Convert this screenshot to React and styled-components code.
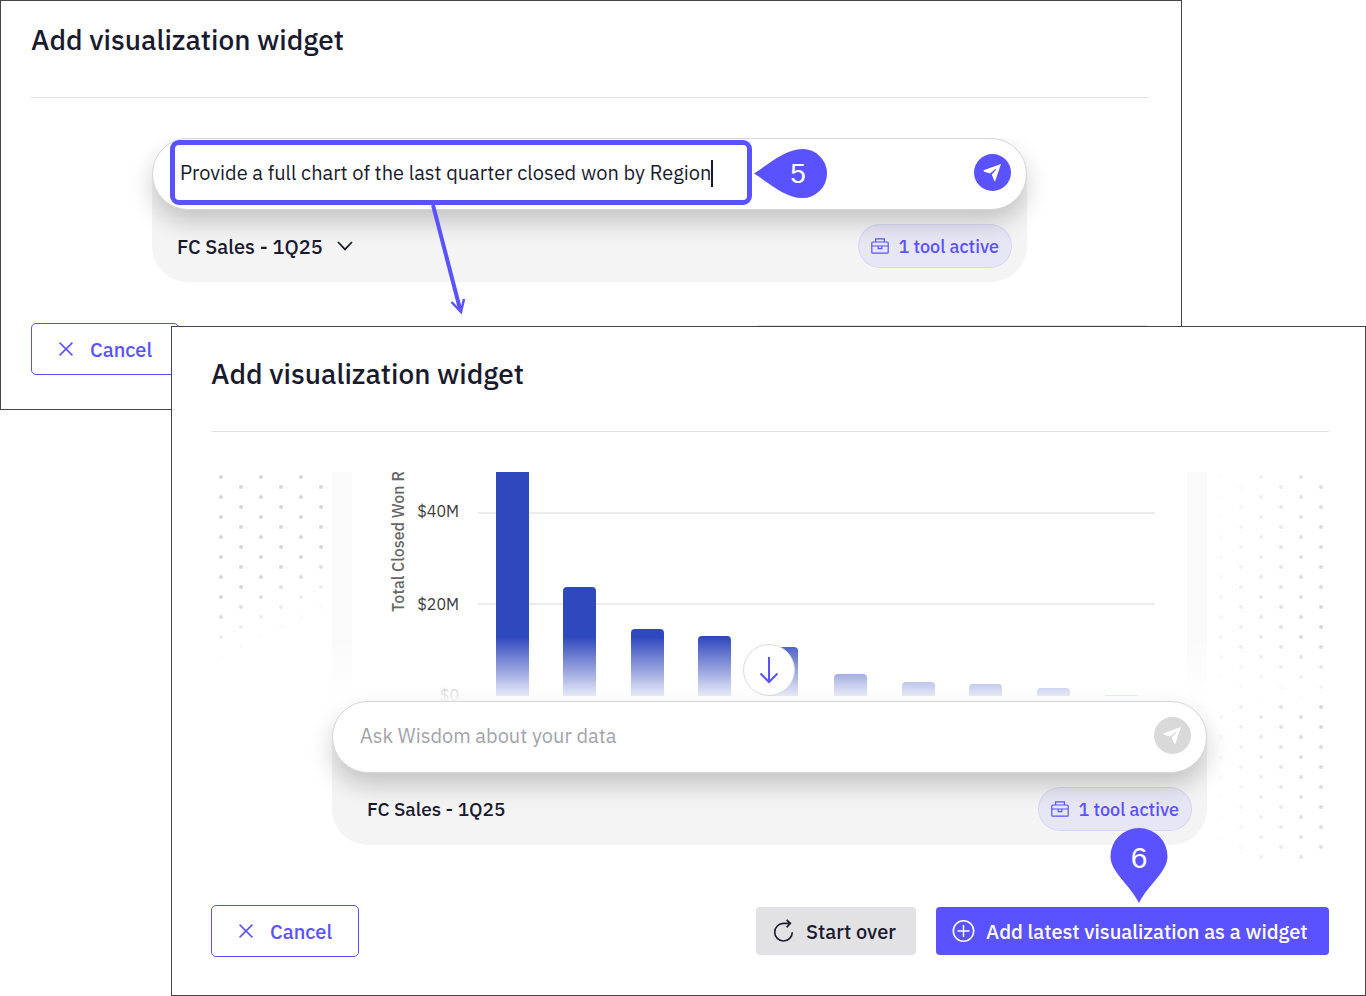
import { useState } from "react";
import styled, { createGlobalStyle, css } from "styled-components";

const bars = [
  { x: 164, top: -20 },
  { x: 231, top: 115 },
  { x: 299, top: 157 },
  { x: 366, top: 164 },
  { x: 433, top: 175 },
  { x: 502, top: 202 },
  { x: 570, top: 210 },
  { x: 637, top: 212 },
  { x: 705, top: 216 },
  { x: 773, top: 223 },
];

const BAR_WIDTH = 33;
const BASELINE = 224;

// rounded top corners only
function barPath({ x, top }) {
  const r = Math.min(4, BASELINE - top);
  return `M${x} ${BASELINE} V${top + r} Q${x} ${top} ${x + r} ${top} H${
    x + BAR_WIDTH - r
  } Q${x + BAR_WIDTH} ${top} ${x + BAR_WIDTH} ${top + r} V${BASELINE} Z`;
}

function makeDots(startX, columns, firstRowOffset, opacityAt) {
  const dots = [];
  for (let c = 0; c < columns; c++) {
    const x = startX + c * 20;
    const offset = (c + firstRowOffset) % 2 === 0 ? 5 : 15;
    for (let y = offset; y < 393; y += 20) {
      const opacity = Math.max(0, Math.min(1, opacityAt(x, y)));
      if (opacity > 0.02) {
        dots.push({ x, y, opacity });
      }
    }
  }
  return dots;
}

const leftDots = makeDots(10, 6, 0, (x, y) => (192 - y - (x - 10) / 2) / 60);
const rightDots = makeDots(
  -6,
  7,
  1,
  (x, y) => (x + 27) / 135 - Math.abs(y - 193) * 0.0014
);

function CloseIcon() {
  return (
    <svg width="14" height="14" viewBox="0 0 14 14" aria-hidden="true">
      <path d="M0.6 0.6 L13.4 13.4 M13.4 0.6 L0.6 13.4" stroke="currentColor" strokeWidth="1.5" />
    </svg>
  );
}

function RestartIcon() {
  return (
    <svg width="22" height="24" viewBox="0 0 22 24" fill="none" aria-hidden="true">
      <path
        d="M20.3 13.2 A8.8 8.8 0 1 1 11.5 4.4 H18.5 M14.6 0.8 L18.4 4.4 L14.6 8.4"
        stroke="currentColor"
        strokeWidth="1.6"
      />
    </svg>
  );
}

function PlusCircleIcon() {
  return (
    <svg width="24" height="24" viewBox="0 0 24 24" fill="none" aria-hidden="true">
      <circle cx="11.5" cy="12" r="10.2" stroke="currentColor" strokeWidth="1.6" />
      <path d="M11.5 6 V18 M5.5 12 H17.5" stroke="currentColor" strokeWidth="1.5" />
    </svg>
  );
}

function SendIcon() {
  return (
    <svg width="37" height="37" viewBox="0 0 37 37" aria-hidden="true">
      <path
        d="M27 10 L9.6 16.2 Q9.6 17.4 10.4 17.7 L16 19.4 L21.8 14.8 Q22.4 15 22 15.8 L17.7 20.6 L20.4 27 Q20.8 27.4 21.2 27 Z"
        fill="#fff"
      />
    </svg>
  );
}

function ToolboxIcon() {
  return (
    <svg width="18" height="18" viewBox="0 0 18 18" fill="none" aria-hidden="true">
      <g stroke="currentColor" strokeWidth="1.2">
        <rect x="0.8" y="5" width="16.4" height="11.2" rx="1" />
        <path d="M4.6 5 V1.8 H13.4 V5 M0.8 9 H17.2 M7.2 9 V11.6 H10.8 V9" />
      </g>
    </svg>
  );
}

function ChevronIcon() {
  return (
    <svg width="16" height="10" viewBox="0 0 16 10" fill="none" aria-hidden="true">
      <path d="M1 1 L8 8.4 L15 1" stroke="currentColor" strokeWidth="1.7" />
    </svg>
  );
}

function DotPattern({ dots }) {
  return (
    <Dots aria-hidden="true">
      {dots.map((dot) => (
        <circle
          key={`${dot.x}-${dot.y}`}
          cx={dot.x}
          cy={dot.y}
          r="2"
          fill="#d6d6d8"
          opacity={dot.opacity}
        />
      ))}
    </Dots>
  );
}

function SalesChart() {
  return (
    <svg width="100%" viewBox="0 0 875 229" role="img" aria-label="Total Closed Won by Region">
      <g stroke="#e6e6e6" strokeWidth="1.5">
        <line x1="146" y1="41" x2="823" y2="41" />
        <line x1="146" y1="132" x2="823" y2="132" />
      </g>
      <AxisText x="127" y="45" textAnchor="end">
        $40M
      </AxisText>
      <AxisText x="127" y="138" textAnchor="end">
        $20M
      </AxisText>
      <AxisText x="127" y="229" textAnchor="end">
        $0
      </AxisText>
      <AxisTitle transform="translate(72 140) rotate(-90)">
        Total Closed Won Revenue
      </AxisTitle>
      {bars.map((bar) => (
        <path key={bar.x} d={barPath(bar)} fill="#3048bd" />
      ))}
    </svg>
  );
}

function Composer({ active, callout, children }) {
  const [text, setText] = useState(
    active ? "Provide a full chart of the last quarter closed won by Region" : ""
  );

  return (
    <ComposerPanel>
      <InputPill>
        <PromptInput
          aria-label="Prompt"
          placeholder="Ask Wisdom about your data"
          $fit={active}
          value={text}
          onChange={(e) => setText(e.target.value)}
        />
        {active && <Caret />}
        <SendButton aria-label="Send" disabled={!active}>
          <SendIcon />
        </SendButton>
        {callout}
      </InputPill>
      <ComposerTools $active={active}>
        {children}
        <ToolBadge>
          <ToolboxIcon />
          1 tool active
        </ToolBadge>
      </ComposerTools>
    </ComposerPanel>
  );
}

function PromptCallout() {
  return (
    <>
      <Highlight />
      <Pointer width="36" height="112" viewBox="0 0 36 112" aria-hidden="true">
        <path d="M3 0 L30 104" stroke="#5a52ff" strokeWidth="4" fill="none" />
        <path d="M21.5 97 L31 107 L34 94" stroke="#5a52ff" strokeWidth="2.5" fill="none" />
      </Pointer>
      <StepFive width="74" height="50" viewBox="0 0 74 50">
        <path
          d="M0 24.5 C17 13.5 32 0 48.5 0 A24.5 24.5 0 0 1 48.5 49 C32 49 17 35.5 0 24.5 Z"
          fill="#5a52ff"
        />
        <StepText x="44" y="34">
          5
        </StepText>
      </StepFive>
    </>
  );
}

export default function App() {
  return (
    <>
      <GlobalStyle />
      <Stage>
        <PromptWindow>
          <Title>Add visualization widget</Title>
          <Body>
            <Composer active callout={<PromptCallout />}>
              <SourceLabel>
                <SourceSelect aria-label="Data source">
                  <option>FC Sales - 1Q25</option>
                </SourceSelect>
                <ChevronIcon />
              </SourceLabel>
            </Composer>
          </Body>
          <Footer>
            <CancelButton>
              <CloseIcon />
              Cancel
            </CancelButton>
            <DisabledButton disabled aria-label="Add widget" />
          </Footer>
        </PromptWindow>

        <ResultWindow>
          <Title>Add visualization widget</Title>
          <Body $tall>
            <Side>
              <DotPattern dots={leftDots} />
            </Side>
            <Side $right>
              <DotPattern dots={rightDots} />
            </Side>
            <ChatScroll>
              <ChatCard>
                <SalesChart />
              </ChatCard>
            </ChatScroll>
            <Fade />
            <ScrollDown aria-label="Scroll to latest">
              <svg width="20" height="28" viewBox="0 0 20 28" fill="none" aria-hidden="true">
                <path
                  d="M10 1 V26 M1.5 17.5 L10 26 L18.5 17.5"
                  stroke="currentColor"
                  strokeWidth="2"
                />
              </svg>
            </ScrollDown>
            <Composer>
              <SourceName>FC Sales - 1Q25</SourceName>
            </Composer>
          </Body>
          <Footer>
            <CancelButton>
              <CloseIcon />
              Cancel
            </CancelButton>
            <Actions>
              <StartOverButton>
                <RestartIcon />
                Start over
              </StartOverButton>
              <AddSlot>
                <AddButton>
                  <PlusCircleIcon />
                  Add latest visualization as a widget
                </AddButton>
                <StepSix width="58" height="75" viewBox="0 0 58 75">
                  <path
                    d="M29 75 C20 57 0.5 44 0.5 28.5 A28.5 28.5 0 0 1 57.5 28.5 C57.5 44 38 57 29 75 Z"
                    fill="#5a52ff"
                  />
                  <StepText x="29" y="40" $large>
                    6
                  </StepText>
                </StepSix>
              </AddSlot>
            </Actions>
          </Footer>
        </ResultWindow>
      </Stage>
    </>
  );
}

const GlobalStyle = createGlobalStyle`
  * {
    box-sizing: border-box;
  }

  body {
    margin: 0;
    background: #fff;
    color: #1a1a2e;
    font-family: "IBM Plex Sans", "Noto Sans", sans-serif;
  }

  button, input, select {
    font: inherit;
    color: inherit;
  }

  svg {
    display: block;
    flex-shrink: 0;
  }
`;

const Stage = styled.main`
  display: grid;
  grid-template-columns: 171px minmax(0, 1fr) 184px;
  grid-template-rows: 326px 84px auto;
`;

const Window = styled.section`
  display: flex;
  flex-direction: column;
  border: 1px solid #444;
  background: #fff;
`;

const PromptWindow = styled(Window)`
  grid-column: 1 / 3;
  grid-row: 1 / 3;
  padding: 19px 32px 34px 30px;
`;

const ResultWindow = styled(Window)`
  grid-column: 2 / 4;
  grid-row: 2 / 4;
  padding: 27px 36px 38px 39px;
`;

const Title = styled.h1`
  margin: 0 0 40px;
  padding-bottom: 37px;
  border-bottom: 1px solid #e2e2e4;
  font-size: 28px;
  font-weight: 500;
  line-height: 40px;
`;

const Body = styled.div`
  display: grid;
  grid-template-columns: minmax(0, 121fr) minmax(0, 875px) minmax(0, 122fr);
  grid-template-rows: ${(props) => (props.$tall ? "229px auto" : "auto")};
  padding-bottom: ${(props) => (props.$tall ? "19px" : "0")};
  /* cut the composer shadow at the top edge, leave the rest free */
  clip-path: inset(0 0 -40px 0);
`;

const Side = styled.div`
  grid-column: ${(props) => (props.$right ? 3 : 1)};
  grid-row: 1 / 3;
`;

const Dots = styled.svg`
  width: 100%;
  height: 100%;
  overflow: visible;
`;

const ChatScroll = styled.div`
  grid-column: 2;
  grid-row: 1;
  overflow: hidden;
  background: #fafafa;
`;

const ChatCard = styled.div`
  height: 100%;
  background: linear-gradient(#fff, #fff) center / calc(100% - 40px) 100% no-repeat;
`;

const Fade = styled.div`
  grid-column: 1 / 4;
  grid-row: 1;
  align-self: end;
  height: 64px;
  background: linear-gradient(rgba(255, 255, 255, 0), rgba(255, 255, 255, 0.97));
  z-index: 1;
`;

const ScrollDown = styled.button`
  grid-column: 2;
  grid-row: 1;
  align-self: end;
  justify-self: center;
  display: flex;
  align-items: center;
  justify-content: center;
  width: 52px;
  height: 52px;
  margin: 0 1px 5px 0;
  padding: 0;
  border: 1px solid #dcdcdc;
  border-radius: 50%;
  background: #fff;
  color: #5a52ff;
  z-index: 2;
`;

const AxisText = styled.text`
  font-size: 16px;
  fill: #3c3c3c;
`;

const AxisTitle = styled.text`
  font-size: 16px;
  font-weight: 500;
  fill: #666;
`;

const ComposerPanel = styled.div`
  grid-column: 2;
  border-radius: 36px;
  background: #f4f4f4;
  z-index: 2;
`;

const InputPill = styled.div`
  position: relative;
  display: flex;
  align-items: center;
  height: 72px;
  padding: 0 15px 2px 27px;
  border: 1px solid #d8d8d8;
  border-radius: 36px;
  background: #fff;
  box-shadow: 0 12px 24px rgba(0, 0, 0, 0.2);
`;

const PromptInput = styled.input`
  min-width: 0;
  padding: 0;
  border: 0;
  outline: 0;
  background: none;
  font-size: 20px;
  font-weight: 400;
  line-height: 28px;
  ${(props) =>
    props.$fit
      ? css`
          field-sizing: content;
        `
      : css`
          flex: 1;
        `}

  &::placeholder {
    color: #a3a3ab;
    opacity: 1;
  }
`;

const Caret = styled.span`
  width: 2px;
  height: 27px;
  background: #1a1a2e;
`;

const SendButton = styled.button`
  width: 37px;
  height: 37px;
  margin: 0 0 2px auto;
  padding: 0;
  border: 0;
  border-radius: 50%;
  background: #5a52ff;

  &:disabled {
    background: #d9d9d9;
  }
`;

const ComposerTools = styled.div`
  display: flex;
  align-items: center;
  justify-content: space-between;
  height: 72px;
  padding: 0 15px 0 ${(props) => (props.$active ? "25px" : "35px")};
`;

const SourceLabel = styled.label`
  display: flex;
  align-items: center;
  gap: 14px;
`;

const SourceSelect = styled.select`
  appearance: none;
  padding: 0;
  border: 0;
  background: none;
  font-size: 20px;
  font-weight: 500;
`;

const SourceName = styled.span`
  font-size: 19px;
  font-weight: 500;
`;

const ToolBadge = styled.button`
  display: flex;
  align-items: center;
  gap: 9px;
  height: 44px;
  padding: 0 12px;
  border: 1px solid rgba(90, 82, 255, 0.12);
  border-radius: 22px;
  background: rgba(90, 82, 255, 0.08);
  color: #5a52ff;
  font-size: 18px;
  font-weight: 500;
`;

const Highlight = styled.span`
  position: absolute;
  top: 1px;
  left: 17px;
  width: 582px;
  height: 65px;
  border: 5px solid #5a52ff;
  border-radius: 9px;
  pointer-events: none;
`;

const Pointer = styled.svg`
  position: absolute;
  top: 66px;
  left: 277px;
  pointer-events: none;
`;

const StepFive = styled.svg`
  position: absolute;
  top: 10px;
  left: 601px;
`;

const StepText = styled.text`
  font-family: "Liberation Sans", Arial, sans-serif;
  font-size: ${(props) => (props.$large ? "30px" : "28px")};
  fill: #fff;
  text-anchor: middle;
`;

const Footer = styled.footer`
  display: flex;
  align-items: center;
  justify-content: space-between;
  margin-top: 41px;
`;

const Actions = styled.div`
  display: flex;
  gap: 20px;
`;

const Button = styled.button`
  display: flex;
  align-items: center;
  height: 48px;
  border: 0;
  border-radius: 4px;
  font-size: 20px;
  font-weight: 500;
`;

const CancelButton = styled(Button)`
  gap: 17px;
  width: 148px;
  height: 52px;
  padding: 0 0 0 27px;
  border: 1px solid #5a52ff;
  border-radius: 5px;
  background: #fff;
  color: #5a52ff;
`;

const DisabledButton = styled(Button)`
  width: 393px;
  background: #e2e2e4;
`;

const StartOverButton = styled(Button)`
  gap: 12px;
  min-width: 160px;
  padding: 0 16px;
  background: #e2e2e4;
`;

const AddSlot = styled.div`
  position: relative;
`;

const AddButton = styled(Button)`
  gap: 10px;
  min-width: 393px;
  padding: 0 16px;
  background: #5a52ff;
  color: #fff;
`;

const StepSix = styled.svg`
  position: absolute;
  bottom: calc(100% + 4px);
  left: 174px;
`;
